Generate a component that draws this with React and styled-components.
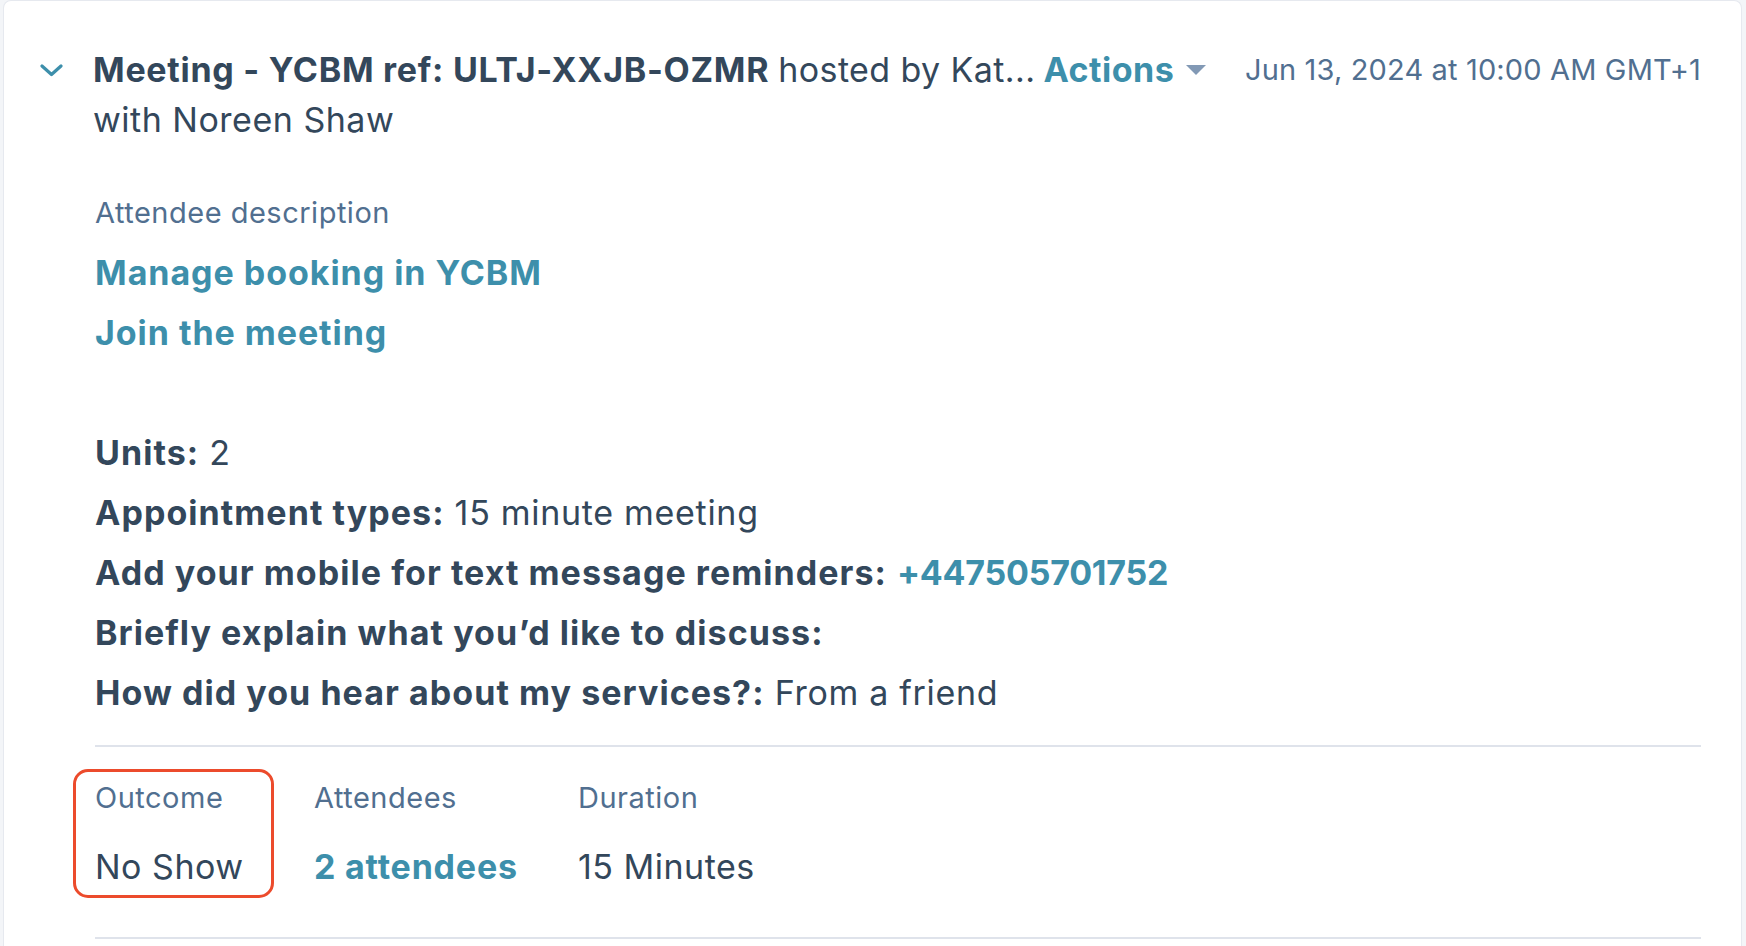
import React from 'react'
import styled, { createGlobalStyle } from 'styled-components'

const colors = {
    text: '#33475b',
    label: '#516f90',
    link: '#3d8fab',
    caret: '#8299b5',
    divider: '#dfe3eb',
    page: '#f3f5f8',
    highlight: '#ec4b2c',
}

const GlobalStyle = createGlobalStyle`
    html, body {
        margin: 0;
        padding: 0;
        background: ${colors.page};
    }
    body {
        font-family: Inter, "Noto Sans", sans-serif;
        color: ${colors.text};
        letter-spacing: 0.5px;
    }
`

const Page = styled.div`
    width: 1746px;
    height: 946px;
    overflow: hidden;
    padding: 0 4px 0 3px;
    box-sizing: border-box;
`

const Card = styled.div`
    background: #fff;
    border: 1px solid #e6e9ef;
    border-bottom: none;
    border-radius: 8px 8px 0 0;
    height: 100%;
    box-sizing: border-box;
    padding: 44px 40px 0 36px;
`

const Header = styled.div`
    display: flex;
    align-items: flex-start;
`

const Toggle = styled.button`
    width: 53px;
    height: 50px;
    padding: 0;
    border: none;
    background: none;
    display: flex;
    align-items: center;
    flex-shrink: 0;
    cursor: pointer;
`

const TitleBlock = styled.div`
    flex: 1;
    min-width: 0;
    font-size: 34px;
    line-height: 50px;
`

const TitleLine = styled.div`
    display: flex;
    align-items: center;
    white-space: nowrap;
`

const Strong = styled.span`
    font-weight: 700;
    letter-spacing: 0.72px;
`

const Question = styled.span`
    font-weight: 700;
    letter-spacing: 1.05px;
`

const Hosted = styled.span`
    margin-left: 9px;
    letter-spacing: 0.4px;
`

const ActionsButton = styled.button`
    display: flex;
    align-items: center;
    gap: 12px;
    margin-left: 8px;
    padding: 0;
    border: none;
    background: none;
    font: inherit;
    font-weight: 700;
    letter-spacing: 0.5px;
    color: ${colors.link};
    cursor: pointer;
`

const DateText = styled.div`
    flex-shrink: 0;
    font-size: 29px;
    line-height: 50px;
    letter-spacing: 0.15px;
    color: ${colors.label};
    white-space: nowrap;
`

const Body = styled.div`
    padding-left: 55px;
`

const Label = styled.div`
    font-size: 29px;
    line-height: 40px;
    color: ${colors.label};
`

const Description = styled.div`
    margin-top: 48px;
`

const Lines = styled.div`
    margin-top: 10px;
    font-size: 34px;
    line-height: 60px;
`

const Line = styled.div`
    min-height: 60px;
    white-space: nowrap;
`

const Answer = styled.span`
    letter-spacing: 0.7px;
`

const Link = styled.a`
    color: ${colors.link};
    font-weight: 700;
    letter-spacing: ${props => props.tight ? '-0.25px' : '0.95px'};
    text-decoration: none;
`

const Divider = styled.hr`
    border: none;
    height: 2px;
    background: ${colors.divider};
    margin: ${props => props.top || 0}px 0 0;
`

const Properties = styled.div`
    display: grid;
    grid-template-columns: 219px 264px auto;
    margin-top: 31px;
`

const Property = styled.div`
    position: relative;
    ${props => props.highlighted && `
        &::before {
            content: '';
            position: absolute;
            left: -22px;
            top: -9px;
            width: 201px;
            height: 129px;
            box-sizing: border-box;
            border: 3.5px solid ${colors.highlight};
            border-radius: 15px;
        }
    `}
`

const Value = styled.div`
    margin-top: 24px;
    font-size: 34px;
    line-height: 50px;
    color: ${props => props.link ? colors.link : colors.text};
    font-weight: ${props => props.link ? 700 : 400};
    letter-spacing: ${props => props.link ? '0.8px' : '0.5px'};
    white-space: nowrap;
`

const Chevron = () => (
    <svg width="23" height="13" viewBox="0 0 23 13">
        <path d="M2 2 L11.5 10.5 L21 2" fill="none" stroke={colors.link} strokeWidth="3.2" strokeLinecap="round" strokeLinejoin="round" />
    </svg>
)

const Caret = () => (
    <svg width="20" height="10" viewBox="0 0 20 10">
        <path d="M0 0 H20 L10 10 Z" fill={colors.caret} />
    </svg>
)

const answers = [
    { q: 'Units:', a: '2' },
    { q: 'Appointment types:', a: '15 minute meeting' },
    { q: 'Add your mobile for text message reminders:', a: '+447505701752', link: true },
    { q: 'Briefly explain what you\u2019d like to discuss:' },
    { q: 'How did you hear about my services?:', a: 'From a friend' },
]

const properties = [
    { label: 'Outcome', value: 'No Show', highlighted: true },
    { label: 'Attendees', value: '2 attendees', link: true },
    { label: 'Duration', value: '15 Minutes' },
]

export default function App() {
    return (
        <Page>
            <GlobalStyle />
            <Card>
                <Header>
                    <Toggle aria-label="Collapse">
                        <Chevron />
                    </Toggle>
                    <TitleBlock>
                        <TitleLine>
                            <Strong>Meeting - YCBM ref: ULTJ-XXJB-OZMR</Strong>
                            <Hosted>hosted by Kat...</Hosted>
                            <ActionsButton>
                                Actions
                                <Caret />
                            </ActionsButton>
                        </TitleLine>
                        <div>with Noreen Shaw</div>
                    </TitleBlock>
                    <DateText>Jun 13, 2024 at 10:00 AM GMT+1</DateText>
                </Header>

                <Body>
                    <Description>
                        <Label>Attendee description</Label>
                        <Lines>
                            <Line><Link href="#">Manage booking in YCBM</Link></Line>
                            <Line><Link href="#">Join the meeting</Link></Line>
                            <Line />
                            {answers.map(item => (
                                <Line key={item.q}>
                                    <Question>{item.q}</Question>
                                    {item.a && ' '}
                                    {item.a && (item.link
                                        ? <Link href="#" tight>{item.a}</Link>
                                        : <Answer>{item.a}</Answer>)}
                                </Line>
                            ))}
                        </Lines>
                    </Description>

                    <Divider top={22} />

                    <Properties>
                        {properties.map(p => (
                            <Property key={p.label} highlighted={p.highlighted}>
                                <Label>{p.label}</Label>
                                <Value link={p.link}>{p.value}</Value>
                            </Property>
                        ))}
                    </Properties>

                    <Divider top={45} />
                </Body>
            </Card>
        </Page>
    )
}
